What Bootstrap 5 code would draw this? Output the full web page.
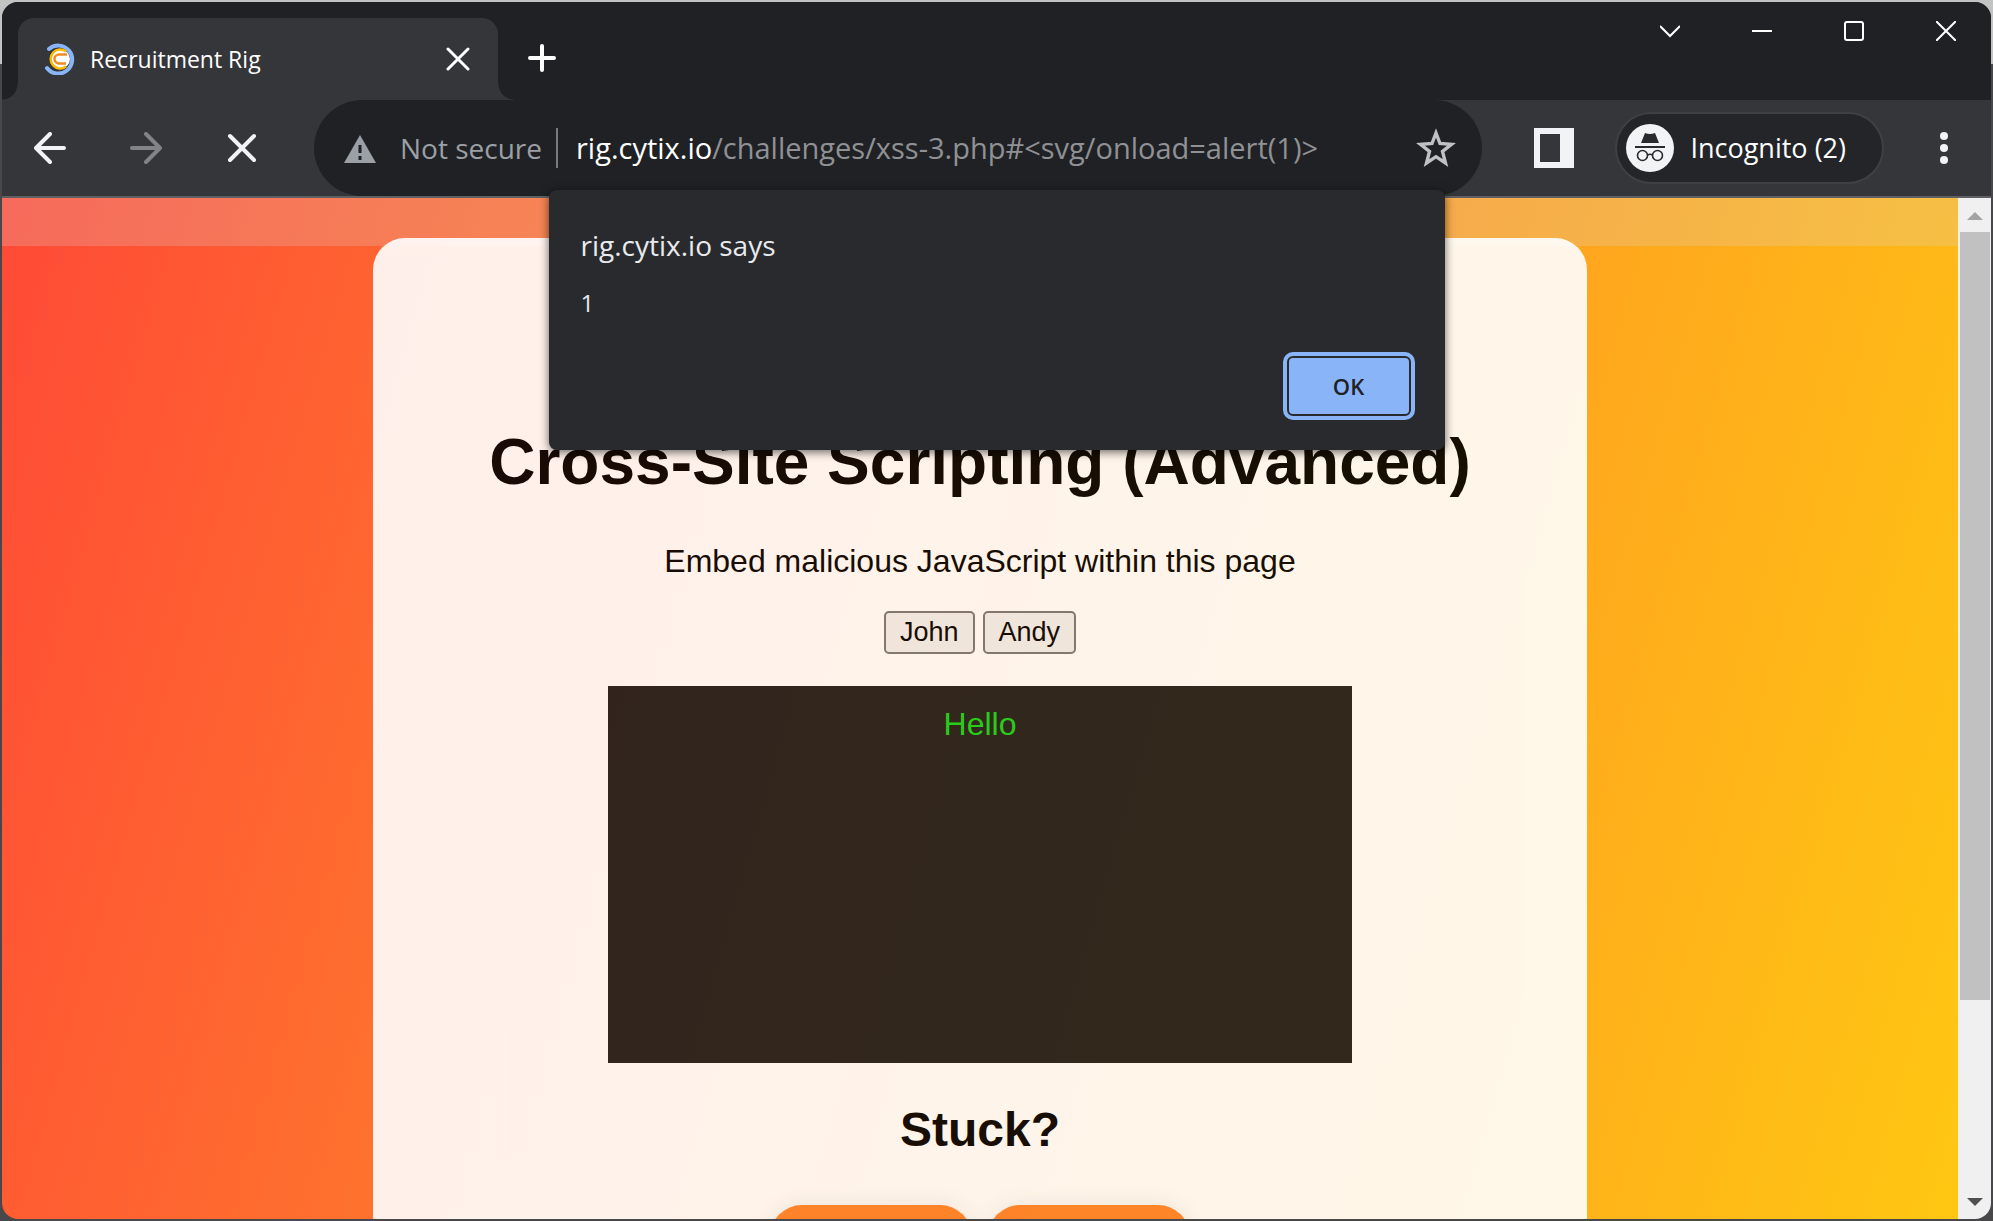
<!DOCTYPE html>
<html lang="en">
<head>
<meta charset="utf-8">
<meta name="viewport" content="width=device-width, initial-scale=1">
<title>Recruitment Rig</title>
<link href="https://cdn.jsdelivr.net/npm/bootstrap@5.3.0/dist/css/bootstrap.min.css" rel="stylesheet">
<style>
  body { font-family: "Open Sans", "Noto Sans", sans-serif; background: linear-gradient(#c2c4c4 64px, #48474a 64px); }
  button { background: none; border: 0; padding: 0; color: inherit; }
  svg { display: block; flex: none; }
  .desk { height: 100vh; padding: 2px; }
  .win { height: 100%; border-radius: 16px; background: #35363a; color: #f1f3f4; }
  .strip { background: #202124; height: 98px; padding: 16px 0 0 16px; }
  .browser-tab { position: relative; width: 480px; background: #35363a; border-radius: 16px 16px 0 0; padding: 0 28px 0 26px; gap: 14px; }
  .browser-tab::before, .browser-tab::after { content: ""; position: absolute; bottom: 0; width: 16px; height: 16px; }
  .browser-tab::before { left: -16px; background: radial-gradient(circle at 0 0, #202124 15px, #35363a 16px); }
  .browser-tab::after { right: -16px; background: radial-gradient(circle at 100% 0, #202124 15px, #35363a 16px); }
  .tab-name { font-size: 23px; line-height: 32px; color: #fff; }
  .controls { gap: 72px; padding: 3px 35px 0 0; }
  .toolbar { height: 96px; padding: 0 43px 0 32px; }
  .omni { height: 96px; border-radius: 48px; background: #202124; margin-left: 56px; padding: 0 26px 0 30px; font-size: 28px; line-height: 40px; }
  .muted-text { color: #9aa0a6; }
  .bar { width: 2px; height: 40px; background: #77797c; margin: 0 18px 0 14px; }
  .url { color: #8f9194; font-size: 29px; }
  .url b { color: #fff; font-weight: 400; }
  .incog { height: 72px; border: 2px solid #3f4042; border-radius: 36px; background: #242528; padding: 0 36px 0 9px; gap: 16px; font-size: 27px; color: #fff; margin: 0 56px 0 41px; }
  .view { border-top: 2px solid #5f6064; min-height: 0; }
  .rig { font-family: "Liberation Sans", Arial, sans-serif; background: linear-gradient(106deg, #ff4a36, #ff8a28 47%, #ffc712); color: #000; }
  .rig-head { height: 48px; background: rgba(216,216,216,.23); flex: none; }
  .sheet { position: relative; width: 62.1%; margin-top: -8px; background: #fff; border-radius: 32px; opacity: .9; padding-top: 187px; height: 1200px; flex: none; }
  .sheet h1 { font-size: 64px; line-height: 74px; font-weight: 700; margin: 0 0 44px; }
  .sheet p { font-size: 32px; line-height: 36px; margin: 0 0 32px; }
  .name-btn { font-size: 27px; line-height: 31px; background: #efefef; border: 2px solid #767676; border-radius: 5px; padding: 4px 14px; height: 43px; }
  .screen { width: 744px; max-width: 90%; height: 377px; background: #1c1c1c; color: #14d31a; font-size: 32px; line-height: 36px; padding-top: 20px; margin-top: 32px; }
  .sheet h2 { font-size: 48px; line-height: 56px; font-weight: 700; margin: 39px 0 47px; }
  .hint { width: 202px; height: 64px; border-radius: 32px; background: #ff832a; box-shadow: 0 0 24px rgba(0,0,0,.08); }
  .scroller { width: 33px; background: #f0f0f0; padding: 14px 0 13px; }
  .thumb { width: 30px; height: 768px; background: #c1c1c1; margin-top: 12px; }
  .says { position: absolute; top: 188px; left: 50%; transform: translateX(-50%); width: 896px; height: 260px; background: #292a2d; border-radius: 8px; box-shadow: 0 2px 10px rgba(0,0,0,.6); padding: 35px 36px 36px 32px; color: #e8eaed; }
  .says-title { font-size: 28px; line-height: 40px; }
  .says-body { font-size: 24px; line-height: 32px; margin-top: 22px; }
  .ok { width: 120px; height: 56px; border-radius: 4px; background: #8ab4f8; color: #202124; font-size: 22px; font-weight: 600; outline: 4px solid #8ab4f8; outline-offset: 2px; }
</style>
</head>
<body>
<div class="desk">
<div class="win d-flex flex-column position-relative overflow-hidden">
  <header class="strip d-flex flex-shrink-0">
    <div class="browser-tab d-flex align-items-center">
      <svg width="32" height="32" viewBox="0 0 32 32" fill="none"><circle cx="16" cy="16" r="10" fill="#fff"/><path d="M5 6A14 14 0 1 1 3 25" stroke="#8ab4f8" stroke-width="4" stroke-linecap="round"/><path d="M22 8.500A9.500 9.500 0 1 0 22 23.500" stroke="#fbbc04" stroke-width="2.500"/><path d="M23 11.500H15a4.500 4.500 0 0 0 0 9h7" stroke="#f28b24" stroke-width="2.500"/></svg>
      <span class="tab-name flex-grow-1">Recruitment Rig</span>
      <button aria-label="Close tab"><svg width="24" height="24" stroke="#fff" stroke-width="3" stroke-linecap="round"><path d="M2 2l20 20M22 2L2 22"/></svg></button>
    </div>
    <button class="align-self-start ms-4 pt-4" aria-label="New tab"><svg class="mx-1" width="32" height="32" stroke="#fff" stroke-width="4" stroke-linecap="round"><path d="M16 4v24M4 16h24"/></svg></button>
    <div class="controls d-flex align-items-start ms-auto">
      <button aria-label="Search tabs"><svg width="20" height="20" fill="none" stroke="#fff" stroke-width="2"><path d="M0 5l10 10L20 5"/></svg></button>
      <button aria-label="Minimize"><svg width="20" height="20" stroke="#fff" stroke-width="2"><path d="M0 10h20"/></svg></button>
      <button aria-label="Maximize"><svg width="20" height="20" fill="none" stroke="#fff" stroke-width="2"><rect x="1" y="1" width="18" height="18" rx="2"/></svg></button>
      <button aria-label="Close"><svg width="20" height="20" stroke="#fff" stroke-width="2"><path d="M0 0l20 20M20 0L0 20"/></svg></button>
    </div>
  </header>
  <nav class="toolbar d-flex align-items-center flex-shrink-0" aria-label="Browser">
    <button aria-label="Back"><svg width="32" height="32" fill="none" stroke="#f1f3f4" stroke-width="4" stroke-linecap="round" stroke-linejoin="round"><path d="M30 16H2M16 2L2 16l14 14"/></svg></button>
    <button class="ms-5 ps-3" aria-label="Forward"><svg width="32" height="32" fill="none" stroke="#828387" stroke-width="4" stroke-linecap="round" stroke-linejoin="round"><path d="M2 16h28M16 2l14 14-14 14"/></svg></button>
    <button class="ms-5 ps-3" aria-label="Stop"><svg width="32" height="32" stroke="#f1f3f4" stroke-width="4" stroke-linecap="round"><path d="M4 4l24 24M28 4L4 28"/></svg></button>
    <div class="omni d-flex align-items-center flex-grow-1">
      <svg width="32" height="32" viewBox="0 0 32 32"><path d="M16 3l16 28H0z" fill="#9aa0a6"/><path d="M16 13v8M16 24v4" stroke="#202124" stroke-width="3"/></svg>
      <span class="muted-text ms-4">Not secure</span>
      <span class="bar"></span>
      <div class="url flex-grow-1 text-nowrap" role="textbox" aria-label="Address"><b>rig.cytix.io</b>/challenges/xss-3.php#&lt;svg/onload=alert(1)&gt;</div>
      <button aria-label="Bookmark"><svg width="40" height="40" viewBox="0 0 40 40"><path d="M20 5l4 10.500 11.500 .8-9 7.200 3 11.500-9.500-6.300-9.500 6.300 3-11.500-9-7.200 11.500-.8z" fill="none" stroke="#c0c1c2" stroke-width="3.400"/></svg></button>
    </div>
    <button class="ms-5" aria-label="Side panel"><svg width="44" height="40"><path d="M4 0h40v40H4zM10 6v28h20V6z" fill="#f1f3f4" fill-rule="evenodd"/></svg></button>
    <button class="incog d-flex align-items-center text-nowrap">
      <svg width="48" height="48" viewBox="0 0 48 48"><circle cx="24" cy="24" r="24" fill="#f1f3f4"/><path d="M19 9q5 2 10 0l4 10H15zM9 22h30v2H9z" fill="#292a2d"/><g fill="none" stroke="#292a2d" stroke-width="1.600"><circle cx="16.500" cy="31.500" r="5"/><circle cx="31.500" cy="31.500" r="5"/><path d="M21.500 31q2.500-1.500 5 0"/></g></svg>
      <span>Incognito (2)</span>
    </button>
    <button aria-label="Menu"><svg width="8" height="32" viewBox="0 0 8 32" fill="#f1f3f4"><circle cx="4" cy="4" r="4"/><circle cx="4" cy="16" r="4"/><circle cx="4" cy="28" r="4"/></svg></button>
  </nav>
  <div class="view d-flex flex-grow-1">
    <main class="rig d-flex flex-column align-items-center flex-grow-1 overflow-hidden">
      <div class="rig-head w-100"></div>
      <section class="sheet d-flex flex-column align-items-center text-center">
        <h1>Cross-Site Scripting (Advanced)</h1>
        <p>Embed malicious JavaScript within this page</p>
        <div class="d-flex gap-2">
          <button class="name-btn">John</button>
          <button class="name-btn">Andy</button>
        </div>
        <div class="screen">Hello</div>
        <h2>Stuck?</h2>
        <div class="d-flex gap-3">
          <button class="hint" aria-label="Hint"></button>
          <button class="hint" aria-label="Solution"></button>
        </div>
      </section>
    </main>
    <div class="scroller d-flex flex-column align-items-center flex-shrink-0">
      <svg width="16" height="8"><path d="M0 8l8-8 8 8z" fill="#a3a3a3"/></svg>
      <div class="thumb"></div>
      <svg class="mt-auto" width="16" height="8"><path d="M0 0h16l-8 8z" fill="#505050"/></svg>
    </div>
  </div>
  <div class="says d-flex flex-column" role="alertdialog" aria-labelledby="saysTitle">
    <div class="says-title" id="saysTitle">rig.cytix.io says</div>
    <div class="says-body">1</div>
    <button class="ok mt-auto align-self-end">OK</button>
  </div>
</div>
</div>
<script src="https://cdn.jsdelivr.net/npm/bootstrap@5.3.0/dist/js/bootstrap.bundle.min.js"></script>
</body>
</html>
